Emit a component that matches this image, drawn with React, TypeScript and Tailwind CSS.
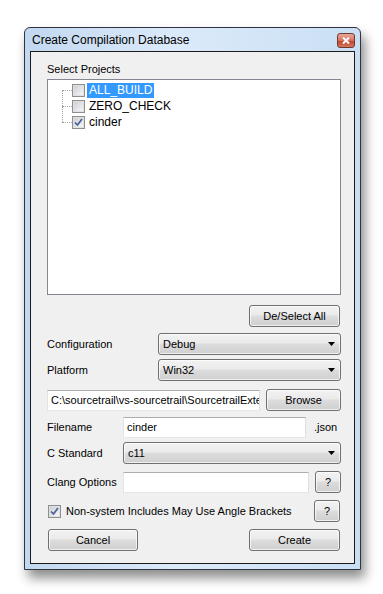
import React from 'react';

const FONT = "font-['Liberation_Sans',Arial,sans-serif]";

const face =
  'flex items-center rounded-[3px] border border-[#707070] bg-[linear-gradient(to_bottom,#f2f2f2_0%,#ebebeb_45%,#dddddd_50%,#cfcfcf_100%)] text-[11px] text-black shadow-[inset_0_0_0_1px_rgba(255,255,255,0.7)]';
const btn = `${face} justify-center`;

const field = 'flex items-center border border-[#abadb3] border-l-[#e2e3ea] border-r-[#dbdfe6] border-b-[#e3e9ef] bg-white px-[3px] text-[11px] text-black';

function Check({ checked }: { checked?: boolean }) {
  return (
    <span className="flex h-[13px] w-[13px] shrink-0 items-center justify-center border border-[#8e8f8f] bg-white">
      <span className="flex h-[11px] w-[11px] items-center justify-center border border-[#e0e0e0] bg-[linear-gradient(135deg,#cbcfd5_0%,#f6f6f6_100%)]">
        {checked && (
          <svg width="9" height="9" viewBox="0 0 9 9">
            <path d="M1 4.5 L3.5 7 L8 1" fill="none" stroke="#4a5f97" strokeWidth="1.7" />
          </svg>
        )}
      </span>
    </span>
  );
}

function Combo({ value, className }: { value: string; className: string }) {
  return (
    <div className={`${face} justify-between pl-[4px] pr-[5px] ${className}`}>
      <span>{value}</span>
      <svg width="7" height="4" viewBox="0 0 7 4">
        <path d="M0 0 H7 L3.5 4 Z" fill="#000" />
      </svg>
    </div>
  );
}

const projects = [
  { name: 'ALL_BUILD', checked: false, selected: true },
  { name: 'ZERO_CHECK', checked: false, selected: false },
  { name: 'cinder', checked: true, selected: false },
];

export default function App() {
  return (
    <div className={`h-[594px] w-[383px] bg-white pl-[24px] pt-[27px] ${FONT}`}>
      <div className="flex h-[543px] w-[337px] flex-col rounded-t-[6px] border border-[#2f3540] bg-[linear-gradient(to_right,#c2d8f0_0%,#dbeafa_45%,#cadff4_100%)] px-[5px] pb-[5px] shadow-[4px_8px_12px_rgba(0,0,0,0.45)]">
        {/* title bar */}
        <div className="flex h-[23px] shrink-0 items-center justify-between pl-[2px]">
          <span className="text-[12px] text-black">Create Compilation Database</span>
          <span className="mt-[1px] flex h-[15px] w-[18px] items-center justify-center rounded-[3px] border border-[#6d3a33] bg-[linear-gradient(to_bottom,#e9a99a_0%,#d8705d_50%,#c2432c_55%,#d27a5f_100%)]">
            <svg width="8" height="7" viewBox="0 0 8 7">
              <path d="M1 0.5 L7 6.5 M7 0.5 L1 6.5" stroke="#fff" strokeWidth="2" />
            </svg>
          </span>
        </div>

        {/* client */}
        <div className="flex flex-1 flex-col border border-[#1b1b1b] bg-[#f0f0f0] pl-[16px] pr-[13px] pt-[10px] text-[11px] text-black">
          <div className="h-[14px] leading-[14px]">Select Projects</div>
          <div className="mt-[3px] h-[216px] w-[294px] border border-[#828790] bg-white pl-[14px] pt-[2px]">
            <div className="relative">
              <div className="absolute left-0 top-[8px] h-[32px] w-0 border-l border-dotted border-[#a0a0a0]" />
              {projects.map((p) => (
                <div key={p.name} className="flex h-[16px] items-center">
                  <div className="w-[10px] border-t border-dotted border-[#a0a0a0]" />
                  <Check checked={p.checked} />
                  <span
                    className={`ml-[2px] px-[2px] text-[12px] leading-[15px] ${
                      p.selected ? 'bg-[#3399ff] text-white' : ''
                    }`}
                  >
                    {p.name}
                  </span>
                </div>
              ))}
            </div>
          </div>

          <div className="mt-[10px] flex justify-end pr-[1px]">
            <div className={`${btn} h-[22px] w-[91px]`}>De/Select All</div>
          </div>

          <div className="mt-[6px] flex h-[22px] items-center">
            <span className="w-[111px]">Configuration</span>
            <Combo value="Debug" className="h-[22px] w-[183px]" />
          </div>
          <div className="mt-[4px] flex h-[22px] items-center">
            <span className="w-[111px]">Platform</span>
            <Combo value="Win32" className="h-[22px] w-[183px]" />
          </div>

          <div className="mt-[8px] flex h-[22px] items-center">
            <div className={`${field} h-[21px] w-[213px] overflow-hidden whitespace-nowrap`}>
              C:\sourcetrail\vs-sourcetrail\SourcetrailExte
            </div>
            <div className={`${btn} ml-[6px] h-[22px] w-[75px]`}>Browse</div>
          </div>

          <div className="mt-[6px] flex h-[21px] items-center">
            <span className="w-[76px]">Filename</span>
            <div className={`${field} h-[21px] w-[183px]`}>cinder</div>
            <span className="ml-[8px]">.json</span>
          </div>

          <div className="mt-[4px] flex h-[22px] items-center">
            <span className="w-[76px]">C Standard</span>
            <Combo value="c11" className="h-[22px] w-[218px]" />
          </div>

          <div className="mt-[7px] flex h-[22px] items-center">
            <span className="w-[76px]">Clang Options</span>
            <div className={`${field} h-[21px] w-[186px]`} />
            <div className={`${btn} ml-[6px] h-[22px] w-[26px]`}>?</div>
          </div>

          <div className="mt-[7px] flex h-[22px] items-center">
            <span className="ml-[1px]">
              <Check checked />
            </span>
            <span className="ml-[5px] flex-1">Non-system Includes May Use Angle Brackets</span>
            <div className={`${btn} mr-[1px] h-[22px] w-[26px]`}>?</div>
          </div>

          <div className="mt-[7px] flex h-[22px] items-center justify-between pl-[1px] pr-[1px]">
            <div className={`${btn} h-[22px] w-[90px]`}>Cancel</div>
            <div className={`${btn} h-[22px] w-[91px]`}>Create</div>
          </div>
        </div>
      </div>
    </div>
  );
}
